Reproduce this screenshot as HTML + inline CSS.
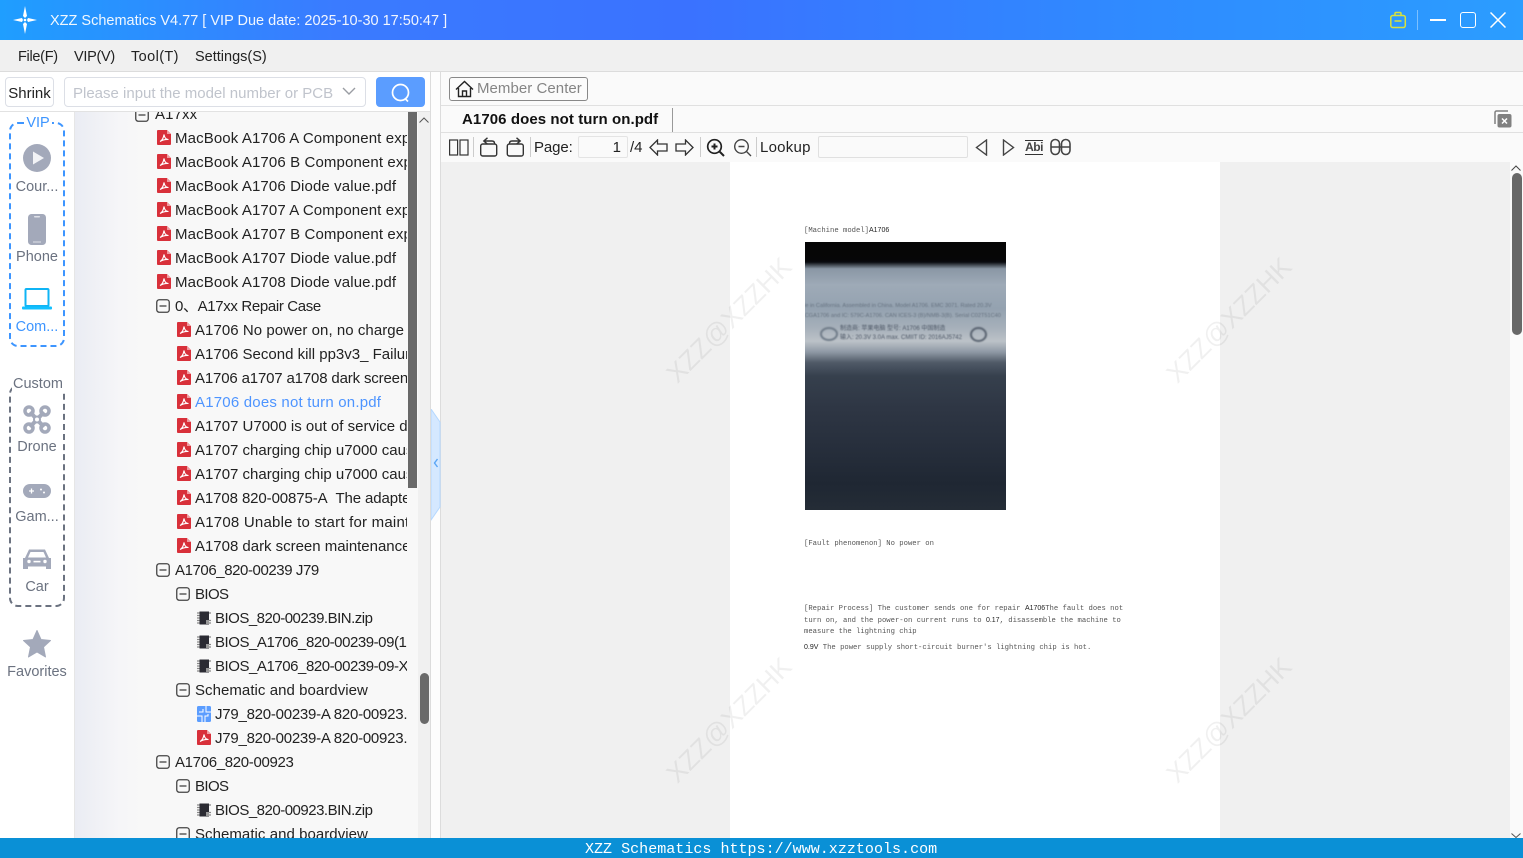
<!DOCTYPE html>
<html><head><meta charset="utf-8"><title>XZZ Schematics</title>
<style>
html,body{margin:0;padding:0;width:1523px;height:858px;overflow:hidden;background:#fff}
*{box-sizing:border-box}
body{font-family:"Liberation Sans","Noto Sans CJK SC",sans-serif;color:#222;position:relative}
.a{position:absolute;white-space:nowrap}
.r{position:absolute;height:24px;line-height:24px;font-size:15px;white-space:nowrap;color:#222;margin-top:1px;letter-spacing:.12px}
.ic{position:absolute}
.side{position:absolute;left:0;width:74px;text-align:center;font-size:14.5px;color:#6b7280;white-space:nowrap;margin-top:1px}
.sep{position:absolute;width:1px;background:#ccc}
.doc{position:absolute;font-family:"Liberation Mono",monospace;font-size:7.23px;color:#555;white-space:nowrap;line-height:9px}
.doc b{font-family:"Liberation Sans",sans-serif;font-weight:400;color:#222;font-size:7px}
.wm{position:absolute;font-size:26.5px;color:rgba(0,0,0,.06);transform:rotate(-45deg);white-space:nowrap;width:200px;text-align:center;line-height:40px}
</style></head><body>
<svg width="0" height="0" style="position:absolute">
<defs>
<symbol id="pdf" viewBox="0 0 14 15"><path d="M1 0H10L14 4V14a1 1 0 0 1-1 1H1a1 1 0 0 1-1-1V1a1 1 0 0 1 1-1z" fill="#d8303a"/><path d="M10 0L14 4H10z" fill="#f09aa0"/><path d="M3 11.5C5 10.5 6.5 8 7 4.5C7.5 8 9 9.5 11.5 9.5C8.5 9.3 5.5 10 3 11.5z" fill="none" stroke="#fff" stroke-width="1.1"/></symbol>
<symbol id="box" viewBox="0 0 14 14"><rect x=".75" y=".75" width="12.5" height="12.5" rx="2.5" fill="none" stroke="#444" stroke-width="1.3"/><path d="M3.5 7H10.5" stroke="#444" stroke-width="1.3"/></symbol>
<symbol id="chip" viewBox="0 0 14 14"><rect x="2.5" y="0.5" width="9.5" height="13" fill="#2b2b33"/><path d="M0 2h2.5M0 4.5h2.5M0 7h2.5M0 9.500h2.500M0 12h2.500M12 2h2M12 9.500h2M12 12h2" stroke="#888" stroke-width="1.200"/><rect x="9" y="9" width="3" height="4" fill="#999"/></symbol>
</defs></svg>

<!-- title bar -->
<div class="a" style="left:0;top:0;width:1523px;height:40px;background:linear-gradient(90deg,#1f9eff 0,#3a7bff 22%,#3a72ff 45%,#2f8bff 75%,#2b9dff 100%)"></div>
<svg class="ic" style="left:12px;top:5px" width="27" height="30" viewBox="0 0 27 30"><path d="M13 1L15 11L13 13L11 11zM13 29L15 19L13 17L11 19zM1 15L10 13L11 15L10 17zM25 15L16 13L15 15L16 17z" fill="#fff"/><circle cx="13" cy="15" r="1.300" fill="#fff"/></svg>
<div class="a" style="left:50px;top:11px;font-size:14.5px;line-height:20px;color:#fff;opacity:.93">XZZ Schematics V4.77 [ VIP Due date: 2025-10-30 17:50:47 ]</div>
<svg class="ic" style="left:1388px;top:10px" width="20" height="20" viewBox="0 0 20 20" fill="none" stroke="#d9e23b" stroke-width="1.500"><rect x="2.800" y="5.500" width="14.500" height="12" rx="2"/><path d="M7 5.500V3.500a1 1 0 0 1 1-1h4a1 1 0 0 1 1 1V5.500M6.500 11H13.500"/></svg>
<div class="a" style="left:1417px;top:10px;width:1px;height:20px;background:#7cc0ff"></div>
<div class="a" style="left:1430px;top:19px;width:16px;height:2px;background:#fff"></div>
<div class="a" style="left:1460px;top:12px;width:16px;height:16px;border:1.500px solid #fff;border-radius:3px"></div>
<svg class="ic" style="left:1490px;top:12px" width="16" height="16" viewBox="0 0 16 16"><path d="M.5 .5L15.500 15.500M15.500 .5L.5 15.500" stroke="#fff" stroke-width="1.500"/></svg>

<!-- menu -->
<div class="a" style="left:0;top:40px;width:1523px;height:32px;background:#f0f0f0;border-bottom:1px solid #dcdcdc"></div>
<div class="a" style="left:18px;top:47px;font-size:14.500px;line-height:20px;color:#222;letter-spacing:-.3px">File(F)</div>
<div class="a" style="left:74px;top:47px;font-size:14.500px;line-height:20px;color:#222;letter-spacing:-.3px">VIP(V)</div>
<div class="a" style="left:131px;top:47px;font-size:14.500px;line-height:20px;color:#222;letter-spacing:.4px">Tool(T)</div>
<div class="a" style="left:195px;top:47px;font-size:14.500px;line-height:20px;color:#222">Settings(S)</div>

<!-- search row -->
<div class="a" style="left:0;top:72px;width:431px;height:40px;background:#fff;border-bottom:1px solid #e2e2e2"></div>
<div class="a" style="left:5px;top:77px;width:49px;height:30px;border:1px solid #dcdfe6;border-radius:4px;font-size:15px;line-height:31px;text-align:center;color:#222">Shrink</div>
<div class="a" style="left:64px;top:77px;width:302px;height:30px;border:1px solid #dcdfe6;border-radius:4px;background:#fff"></div>
<div class="a" style="left:73px;top:84px;font-size:15px;line-height:20px;color:#c0c4cc">Please input the model number or PCB</div>
<svg class="ic" style="left:342px;top:87px" width="14" height="9" viewBox="0 0 14 9"><path d="M1 1L7 7L13 1" fill="none" stroke="#9a9da3" stroke-width="1.400"/></svg>
<div class="a" style="left:376px;top:77px;width:49px;height:30px;background:#5b9dff;border-radius:4px"></div>
<svg class="ic" style="left:390px;top:82px" width="22" height="22" viewBox="0 0 22 22" fill="none" stroke="#fff" stroke-width="1.700"><circle cx="10.500" cy="10.500" r="8"/><path d="M15.500 17L18 19.500"/></svg>

<!-- sidebar -->
<div class="a" style="left:74px;top:112px;width:1px;height:726px;background:#e6e6e6"></div>
<div class="a" style="left:9px;top:122px;width:56px;height:225px;border:2px dashed #3d95ff;border-radius:9px"></div>
<div class="a" style="left:24px;top:115px;width:28px;height:17px;background:#fff;text-align:center;font-size:14.500px;line-height:17px;color:#3d95ff">VIP</div>
<svg class="ic" style="left:23px;top:144px" width="28" height="28" viewBox="0 0 28 28"><circle cx="14" cy="14" r="14" fill="#a3a9ba"/><path d="M10 7.500L21 14L10 20.500z" fill="#f2f3f6"/></svg>
<div class="side" style="top:177px;line-height:18px">Cour...</div>
<svg class="ic" style="left:28px;top:214px" width="18" height="31" viewBox="0 0 18 31"><rect width="18" height="31" rx="3.500" fill="#a3a9ba"/><rect x="6" y="2" width="6" height="1.500" rx=".7" fill="#dfe1e8"/><rect x="5" y="27.500" width="8" height="1" fill="#dfe1e8"/></svg>
<div class="side" style="top:247px;line-height:18px">Phone</div>
<svg class="ic" style="left:22px;top:288px" width="30" height="22" viewBox="0 0 30 22"><rect x="3.500" y="1" width="23" height="17" rx="1" fill="none" stroke="#0fb4f5" stroke-width="2"/><rect x="0" y="18.500" width="30" height="3" rx="1" fill="#12c0ff"/></svg>
<div class="side" style="top:317px;line-height:18px;color:#3d95ff">Com...</div>

<div class="a" style="left:9px;top:385px;width:56px;height:222px;border:2px dashed #6b7280;border-radius:9px"></div>
<div class="a" style="left:12px;top:376px;width:52px;height:17px;background:#fff;text-align:center;font-size:14.500px;line-height:17px;color:#6b7280">Custom</div>
<svg class="ic" style="left:23px;top:405px" width="28" height="29" viewBox="0 0 28 29" fill="none" stroke="#a3a9ba"><path d="M7 7L21 22M21 7L7 22" stroke-width="4"/><circle cx="6" cy="6" r="4" stroke-width="3.500"/><circle cx="22" cy="6" r="4" stroke-width="3.500"/><circle cx="6" cy="23" r="4" stroke-width="3.500"/><circle cx="22" cy="23" r="4" stroke-width="3.500"/><circle cx="14" cy="14.500" r="3" fill="#fff" stroke-width="2"/></svg>
<div class="side" style="top:437px;line-height:18px">Drone</div>
<svg class="ic" style="left:23px;top:484px" width="28" height="14" viewBox="0 0 28 14"><rect width="28" height="14" rx="7" fill="#a3a9ba"/><path d="M6 7h5M8.500 4.500v5" stroke="#fff" stroke-width="1.300"/><circle cx="18" cy="5.500" r="1" fill="#fff"/><circle cx="21" cy="8.500" r="1" fill="#fff"/></svg>
<div class="side" style="top:507px;line-height:18px">Gam...</div>
<svg class="ic" style="left:23px;top:548px" width="28" height="23" viewBox="0 0 28 23"><path d="M6 1.500H22L26 10H28V21H23V18.500H5V21H0V10H2z" fill="#a3a9ba"/><path d="M7.500 4H20.500L23 9.500H5z" fill="#fff"/><circle cx="6" cy="13.500" r="1.700" fill="#fff"/><circle cx="22" cy="13.500" r="1.700" fill="#fff"/><rect x="10.500" y="12.800" width="7" height="1.600" fill="#fff"/></svg>
<div class="side" style="top:577px;line-height:18px">Car</div>
<svg class="ic" style="left:23px;top:630px" width="28" height="28" viewBox="0 0 28 28"><path d="M14 0.500L18 9.500L27.500 10.500L20.500 17L22.500 27L14 22L5.500 27L7.500 17L.5 10.500L10 9.500z" fill="#a3a9ba" stroke="#a3a9ba" stroke-linejoin="round"/></svg>
<div class="side" style="top:662px;line-height:18px">Favorites</div>

<!-- tree -->
<div class="a" style="left:75px;top:112px;width:355px;height:726px;background:linear-gradient(90deg,#eaecf3 0,#f6f6f8 45px,#f8f8f8 70px)"></div>
<div class="a" style="left:75px;top:112px;width:332px;height:726px;overflow:hidden">
<svg class="ic" style="left:60px;top:-4px" width="14" height="14"><use href="#box"/></svg><div class="r" style="left:80px;top:-10px">A17xx</div>

<svg class="ic" style="left:82px;top:18px" width="14" height="15"><use href="#pdf"/></svg><div class="r" style="left:100px;top:14px">MacBook A1706 A Component exp</div>
<svg class="ic" style="left:82px;top:42px" width="14" height="15"><use href="#pdf"/></svg><div class="r" style="left:100px;top:38px">MacBook A1706 B Component exp</div>
<svg class="ic" style="left:82px;top:66px" width="14" height="15"><use href="#pdf"/></svg><div class="r" style="left:100px;top:62px">MacBook A1706 Diode value.pdf</div>
<svg class="ic" style="left:82px;top:90px" width="14" height="15"><use href="#pdf"/></svg><div class="r" style="left:100px;top:86px">MacBook A1707 A Component exp</div>
<svg class="ic" style="left:82px;top:114px" width="14" height="15"><use href="#pdf"/></svg><div class="r" style="left:100px;top:110px">MacBook A1707 B Component exp</div>
<svg class="ic" style="left:82px;top:138px" width="14" height="15"><use href="#pdf"/></svg><div class="r" style="left:100px;top:134px">MacBook A1707 Diode value.pdf</div>
<svg class="ic" style="left:82px;top:162px" width="14" height="15"><use href="#pdf"/></svg><div class="r" style="left:100px;top:158px">MacBook A1708 Diode value.pdf</div>

<svg class="ic" style="left:81px;top:187px" width="14" height="14"><use href="#box"/></svg><div class="r" style="left:100px;top:182px;letter-spacing:-.35px">0、A17xx Repair Case</div>

<svg class="ic" style="left:102px;top:210px" width="14" height="15"><use href="#pdf"/></svg><div class="r" style="left:120px;top:206px;letter-spacing:.05px">A1706 No power on, no charge</div>
<svg class="ic" style="left:102px;top:234px" width="14" height="15"><use href="#pdf"/></svg><div class="r" style="left:120px;top:230px;letter-spacing:0">A1706 Second kill pp3v3_ Failure</div>
<svg class="ic" style="left:102px;top:258px" width="14" height="15"><use href="#pdf"/></svg><div class="r" style="left:120px;top:254px;letter-spacing:-.16px">A1706 a1707 a1708 dark screen</div>
<svg class="ic" style="left:102px;top:282px" width="14" height="15"><use href="#pdf"/></svg><div class="r" style="left:120px;top:278px;color:#4d94ff;letter-spacing:.2px">A1706 does not turn on.pdf</div>
<svg class="ic" style="left:102px;top:306px" width="14" height="15"><use href="#pdf"/></svg><div class="r" style="left:120px;top:302px;letter-spacing:0">A1707 U7000 is out of service due</div>
<svg class="ic" style="left:102px;top:330px" width="14" height="15"><use href="#pdf"/></svg><div class="r" style="left:120px;top:326px;letter-spacing:0">A1707 charging chip u7000 cause</div>
<svg class="ic" style="left:102px;top:354px" width="14" height="15"><use href="#pdf"/></svg><div class="r" style="left:120px;top:350px;letter-spacing:0">A1707 charging chip u7000 cause</div>
<svg class="ic" style="left:102px;top:378px" width="14" height="15"><use href="#pdf"/></svg><div class="r" style="left:120px;top:374px;letter-spacing:-.1px">A1708 820-00875-A&nbsp; The adapter</div>
<svg class="ic" style="left:102px;top:402px" width="14" height="15"><use href="#pdf"/></svg><div class="r" style="left:120px;top:398px;letter-spacing:.22px">A1708 Unable to start for maintenance</div>
<svg class="ic" style="left:102px;top:426px" width="14" height="15"><use href="#pdf"/></svg><div class="r" style="left:120px;top:422px;letter-spacing:-.02px">A1708 dark screen maintenance</div>

<svg class="ic" style="left:81px;top:451px" width="14" height="14"><use href="#box"/></svg><div class="r" style="left:100px;top:446px;letter-spacing:-.42px">A1706_820-00239 J79</div>
<svg class="ic" style="left:101px;top:475px" width="14" height="14"><use href="#box"/></svg><div class="r" style="left:120px;top:470px;letter-spacing:-.6px">BIOS</div>
<svg class="ic" style="left:122px;top:499px" width="14" height="14"><use href="#chip"/></svg><div class="r" style="left:140px;top:494px;letter-spacing:-.5px">BIOS_820-00239.BIN.zip</div>
<svg class="ic" style="left:122px;top:523px" width="14" height="14"><use href="#chip"/></svg><div class="r" style="left:140px;top:518px;letter-spacing:-.45px">BIOS_A1706_820-00239-09(1</div>
<svg class="ic" style="left:122px;top:547px" width="14" height="14"><use href="#chip"/></svg><div class="r" style="left:140px;top:542px;letter-spacing:-.45px">BIOS_A1706_820-00239-09-X</div>
<svg class="ic" style="left:101px;top:571px" width="14" height="14"><use href="#box"/></svg><div class="r" style="left:120px;top:566px;letter-spacing:.05px">Schematic and boardview</div>
<svg class="ic" style="left:122px;top:594px" width="14" height="16" viewBox="0 0 14 16"><rect width="14" height="16" rx="1.500" fill="#5b9dff"/><path d="M2 6H6V3M9 0V6H14M0 10H5V16M8 16V10H11V8" fill="none" stroke="#fff" stroke-width="1"/></svg><div class="r" style="left:140px;top:590px;letter-spacing:-.24px">J79_820-00239-A 820-00923.pdf</div>
<svg class="ic" style="left:122px;top:618px" width="14" height="15"><use href="#pdf"/></svg><div class="r" style="left:140px;top:614px;letter-spacing:-.24px">J79_820-00239-A 820-00923.pdf</div>
<svg class="ic" style="left:81px;top:643px" width="14" height="14"><use href="#box"/></svg><div class="r" style="left:100px;top:638px;letter-spacing:-.33px">A1706_820-00923</div>
<svg class="ic" style="left:101px;top:667px" width="14" height="14"><use href="#box"/></svg><div class="r" style="left:120px;top:662px;letter-spacing:-.6px">BIOS</div>
<svg class="ic" style="left:122px;top:691px" width="14" height="14"><use href="#chip"/></svg><div class="r" style="left:140px;top:686px;letter-spacing:-.5px">BIOS_820-00923.BIN.zip</div>
<svg class="ic" style="left:101px;top:715px" width="14" height="14"><use href="#box"/></svg><div class="r" style="left:120px;top:710px;letter-spacing:.05px">Schematic and boardview</div>
</div>
<div class="a" style="left:408px;top:112px;width:9px;height:376px;background:#696969"></div>
<div class="a" style="left:418px;top:112px;width:12px;height:726px;background:#f0f0f0"></div>
<svg class="ic" style="left:419px;top:117px" width="10" height="6" viewBox="0 0 10 6"><path d="M.5 5.500L5 1L9.500 5.500" fill="none" stroke="#555"/></svg>
<div class="a" style="left:420px;top:673px;width:9px;height:51px;background:#696969;border-radius:5px"></div>

<!-- splitter -->
<div class="a" style="left:430px;top:72px;width:11px;height:766px;background:#fdfdfd;border-left:1px solid #dcdcdc;border-right:1px solid #dcdcdc"></div>
<svg class="ic" style="left:431px;top:409px" width="10" height="112" viewBox="0 0 10 112"><path d="M0 0L9 13V98L0 111z" fill="#d5e8ff" stroke="#b5d8ff"/><path d="M6.500 50L3.500 54L6.500 58" fill="none" stroke="#5aa5f5" stroke-width="1.400"/></svg>

<!-- right header -->
<div class="a" style="left:441px;top:72px;width:1082px;height:34px;background:#fafafa;border-bottom:1px solid #e0e0e0"></div>
<div class="a" style="left:449px;top:77px;width:139px;height:24px;border:1px solid #888;border-radius:3px;background:#fbfbfb"></div>
<svg class="ic" style="left:455px;top:80px" width="19" height="18" viewBox="0 0 19 18" fill="none" stroke="#222" stroke-width="1.400"><path d="M1 9.500L9.500 1.500L18 9.500M3.500 8V16.500H15.500V8M7.500 16.500V11H11.500V16.500"/></svg>
<div class="a" style="left:477px;top:79px;font-size:15px;line-height:20px;color:#858585;letter-spacing:.05px">Member Center</div>

<div class="a" style="left:441px;top:106px;width:1082px;height:27px;background:#fafafa;border-bottom:1px solid #e0e0e0"></div>
<div class="a" style="left:462px;top:110px;font-size:15px;line-height:20px;font-weight:700;color:#111;letter-spacing:.08px">A1706 does not turn on.pdf</div>
<div class="a" style="left:672px;top:108px;width:1px;height:24px;background:#999"></div>
<svg class="ic" style="left:1494px;top:110px" width="18" height="18" viewBox="0 0 18 18"><path d="M1 14V2.500A1.500 1.500 0 0 1 2.500 1H14" fill="none" stroke="#808080" stroke-width="1.500"/><rect x="3.500" y="4" width="14" height="13.500" rx="2" fill="#808080"/><path d="M8 8.500L13 13.500M13 8.500L8 13.500" stroke="#fff" stroke-width="1.500"/></svg>

<!-- toolbar -->
<div class="a" style="left:441px;top:133px;width:1082px;height:29px;background:#fafafa"></div>
<svg class="ic" style="left:449px;top:139px" width="20" height="17" viewBox="0 0 20 17" fill="none" stroke="#333" stroke-width="1.200"><rect x=".6" y="1" width="8" height="15"/><rect x="11" y="1" width="8" height="15"/></svg>
<div class="sep" style="left:473px;top:137px;height:20px"></div>
<svg class="ic" style="left:479px;top:137px" width="20" height="20" viewBox="0 0 20 20" fill="none" stroke="#333" stroke-width="1.400"><rect x="1.700" y="7" width="16" height="12" rx="2"/><path d="M5 4H13Q15.500 4 15.500 6.500M8.500 .8L4.800 4L8.500 7.200" fill="#fafafa"/></svg>
<svg class="ic" style="left:505px;top:137px" width="20" height="20" viewBox="0 0 20 20" fill="none" stroke="#333" stroke-width="1.400"><rect x="2.300" y="7" width="16" height="12" rx="2"/><path d="M15 4H7Q4.500 4 4.500 6.500M11.500 .8L15.200 4L11.500 7.200" fill="#fafafa"/></svg>
<div class="sep" style="left:530px;top:137px;height:20px"></div>
<div class="a" style="left:534px;top:138px;font-size:15px;line-height:20px;color:#222;letter-spacing:-.1px">Page:</div>
<div class="a" style="left:578px;top:136px;width:50px;height:22px;border:1px solid #e4e4e4;border-radius:2px;background:#fafafa;font-size:15px;line-height:21px;text-align:right;padding-right:6px;color:#222">1</div>
<div class="a" style="left:630px;top:138px;font-size:15px;line-height:20px;color:#222">/4</div>
<svg class="ic" style="left:649px;top:139px" width="19" height="17" viewBox="0 0 19 17"><path d="M1 8.500L8.500 1V5H18V12H8.500V16z" fill="none" stroke="#333" stroke-width="1.300"/></svg>
<svg class="ic" style="left:675px;top:139px" width="19" height="17" viewBox="0 0 19 17"><path d="M18 8.500L10.500 1V5H1V12H10.500V16z" fill="none" stroke="#333" stroke-width="1.300"/></svg>
<div class="sep" style="left:700px;top:137px;height:20px"></div>
<svg class="ic" style="left:706px;top:138px" width="19" height="19" viewBox="0 0 19 19" fill="none" stroke="#222" stroke-width="1.700"><circle cx="8.500" cy="8.500" r="6.800"/><path d="M13.500 13.500L18 18M5.500 8.500H11.500M8.500 5.500V11.500" stroke-width="2"/></svg>
<svg class="ic" style="left:733px;top:138px" width="19" height="19" viewBox="0 0 19 19" fill="none" stroke="#444" stroke-width="1.400"><circle cx="8.500" cy="8.500" r="6.800"/><path d="M13.500 13.500L18 18M5.500 8.500H11.500"/></svg>
<div class="sep" style="left:756px;top:137px;height:20px"></div>
<div class="a" style="left:760px;top:138px;font-size:15px;line-height:20px;color:#222;letter-spacing:.25px">Lookup</div>
<div class="a" style="left:818px;top:136px;width:150px;height:22px;border:1px solid #e0e0e0;border-radius:2px;background:#fafafa"></div>
<svg class="ic" style="left:975px;top:139px" width="13" height="17" viewBox="0 0 13 17"><path d="M11.500 1L1.500 8.500L11.500 16z" fill="none" stroke="#444" stroke-width="1.400"/></svg>
<svg class="ic" style="left:1002px;top:139px" width="13" height="17" viewBox="0 0 13 17"><path d="M1.500 1L11.500 8.500L1.500 16z" fill="none" stroke="#444" stroke-width="1.400"/></svg>
<div class="a" style="left:1025px;top:140px;width:18px;height:15px;border-top:1px solid #333;border-bottom:1px solid #333;font-size:12px;font-weight:700;line-height:13px;color:#444;text-align:center;letter-spacing:-.5px">Abi</div>
<svg class="ic" style="left:1050px;top:138px" width="21" height="18" viewBox="0 0 21 18" fill="none" stroke="#444" stroke-width="1.600"><rect x="1" y="1.500" width="8.500" height="15" rx="4.200"/><rect x="11.500" y="1.500" width="8.500" height="15" rx="4.200"/><path d="M1 9H20"/></svg>

<!-- pdf area -->
<div class="a" style="left:441px;top:162px;width:1069px;height:676px;background:#f0f0f0"></div>
<div class="a" style="left:1510px;top:162px;width:13px;height:676px;background:#fafafa"></div>
<svg class="ic" style="left:1511px;top:165px" width="10" height="6" viewBox="0 0 10 6"><path d="M.5 5.500L5 1L9.500 5.500" fill="none" stroke="#444"/></svg>
<div class="a" style="left:1512px;top:173px;width:10px;height:162px;background:#686868;border-radius:5px"></div>
<svg class="ic" style="left:1511px;top:833px" width="10" height="5" viewBox="0 0 10 5"><path d="M.5 .5L5 4.500L9.500 .5" fill="none" stroke="#555"/></svg>
<div class="a" style="left:730px;top:162px;width:490px;height:676px;background:#fff"></div>

<div class="doc" style="left:804px;top:226px">[Machine model]<b>A1706</b></div>
<div class="a" style="left:805px;top:242px;width:201px;height:268px;overflow:hidden;background:linear-gradient(180deg,#050505 0,#060607 6.500%,#0a0c10 7.500%,#8a97a5 10%,#9eaab7 16%,#94a2b0 25%,#a6b0ba 32%,#bcc2c8 37%,#8f99a5 41%,#505a67 45%,#36404d 50%,#2e3644 62%,#262e3b 78%,#1f2733 90%,#242c36 100%)">
<div class="a" style="left:-4px;top:59px;font-size:5.600px;line-height:10px;color:#667280;filter:blur(.5px)">ple in California. Assembled in China. Model A1706. EMC 3071. Rated 20.3V<br>ACGA1706 and IC: 579C-A1706. CAN ICES-3 (B)/NMB-3(B). Serial C02T51C40</div>
<div class="a" style="left:35px;top:83px;font-size:6px;line-height:9px;color:#4d5766;filter:blur(.5px)">制造商: 苹果电脑 型号: A1706 中国制造<br>输入: 20.3V 3.0A max. CMIIT ID: 2016AJ5742</div>
<div class="a" style="left:15px;top:85px;width:18px;height:14px;border:2px solid #6f7b88;border-radius:50%;filter:blur(.7px)"></div>
<div class="a" style="left:165px;top:85px;width:17px;height:15px;border:2px solid #58626f;border-radius:50%;filter:blur(.7px)"></div>
</div>
<div class="doc" style="left:804px;top:540px">[Fault phenomenon] No power on</div>
<div class="doc" style="left:804px;top:604px">[Repair Process] The customer sends one for repair <b>A1706</b>The fault does not</div>
<div class="doc" style="left:804px;top:616px">turn on, and the power-on current runs to <b>0.17</b>, disassemble the machine to</div>
<div class="doc" style="left:804px;top:628px">measure the lightning chip</div>
<div class="doc" style="left:804px;top:643px"><b>0.9V</b> The power supply short-circuit burner's lightning chip is hot.</div>

<div class="wm" style="left:629px;top:300px">XZZ@XZZHK</div>
<div class="wm" style="left:1129px;top:300px">XZZ@XZZHK</div>
<div class="wm" style="left:629px;top:700px">XZZ@XZZHK</div>
<div class="wm" style="left:1129px;top:700px">XZZ@XZZHK</div>

<!-- footer -->
<div class="a" style="left:0;top:838px;width:1523px;height:20px;background:#0a90d6"></div>
<div class="a" style="left:585px;top:840px;font-family:'Liberation Mono',monospace;font-size:15.050px;line-height:19px;color:#fff">XZZ Schematics https://www.xzztools.com</div>
</body></html>
